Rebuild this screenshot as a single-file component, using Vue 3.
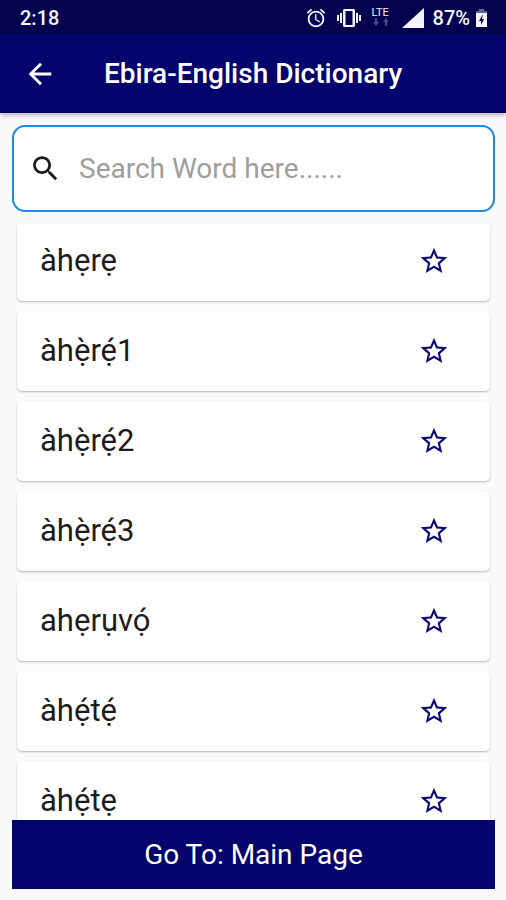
<script setup>
import { ref, computed } from 'vue'

const query = ref('')
const words = ref([
  { text: 'àhẹrẹ', starred: false },
  { text: 'àhẹ̀rẹ́1', starred: false },
  { text: 'àhẹ̀rẹ́2', starred: false },
  { text: 'àhẹ̀rẹ́3', starred: false },
  { text: 'ahẹrụvọ́', starred: false },
  { text: 'àhẹ́tẹ́', starred: false },
  { text: 'àhẹ́tẹ', starred: false }
])
const visible = computed(() =>
  words.value.filter((w) => w.text.normalize('NFC').includes(query.value.trim().normalize('NFC')))
)
</script>

<template>
  <div class="screen">
    <div class="status">
      <span class="clock">2:18</span>
      <div class="indicators">
        <svg class="alarm" viewBox="0 0 24 24" aria-hidden="true">
          <path d="M22 5.72l-4.6-3.86-1.29 1.53 4.6 3.86L22 5.72zM7.88 3.39L6.6 1.86 2 5.71l1.29 1.53 4.59-3.85zM12.5 8H11v6l4.75 2.85.75-1.23-4-2.37V8zM12 4c-4.97 0-9 4.03-9 9s4.02 9 9 9c4.97 0 9-4.03 9-9s-4.03-9-9-9zm0 16c-3.87 0-7-3.13-7-7s3.13-7 7-7 7 3.13 7 7-3.13 7-7 7z" />
        </svg>
        <svg class="vibrate" viewBox="0 0 24 24" aria-hidden="true">
          <path d="M0 15h2V9H0v6zm3 2h2V7H3v10zm19-8v6h2V9h-2zm-3 8h2V7h-2v10zM16.5 3h-9C6.67 3 6 3.67 6 4.5v15c0 .83.67 1.5 1.5 1.5h9c.83 0 1.5-.67 1.5-1.5v-15c0-.83-.67-1.5-1.5-1.5zM15.5 19h-7V5h7v14z" />
        </svg>
        <div class="network">
          <span>LTE</span>
          <svg viewBox="0 0 18 8" aria-hidden="true">
            <path d="M3 0h2v4h2L4 8 1 4h2zM13 8h2V4h2l-3-4-3 4h2z" />
          </svg>
        </div>
        <svg class="signal" viewBox="0 0 22 20" aria-hidden="true"><path d="M22 0v20H0z" /></svg>
        <span class="percent">87%</span>
        <svg class="battery" viewBox="0 0 11 18" aria-hidden="true">
          <path class="cap" d="M3 0h5v2h3v2H0V2h3z" />
          <path fill-rule="evenodd" d="M0 4h11v14H0zM7 5l-4 7h2v4l3-6H6z" />
        </svg>
      </div>
    </div>

    <header class="appbar">
      <button class="back" type="button" aria-label="Back">
        <svg viewBox="0 0 24 24" aria-hidden="true">
          <path d="M20 11H7.83l5.59-5.59L12 4l-8 8 8 8 1.41-1.41L7.83 13H20v-2z" />
        </svg>
      </button>
      <h1>Ebira-English Dictionary</h1>
    </header>

    <main class="content">
      <label class="search">
        <svg viewBox="0 0 24 24" aria-hidden="true">
          <path d="M15.5 14h-.79l-.28-.27C15.41 12.59 16 11.11 16 9.5 16 5.91 13.09 3 9.5 3S3 5.91 3 9.5 5.91 16 9.5 16c1.61 0 3.09-.59 4.23-1.57l.27.28v.79l5 4.99L20.49 19l-4.99-5zm-6 0C7.01 14 5 11.99 5 9.5S7.01 5 9.5 5 14 7.01 14 9.5 11.99 14 9.5 14z" />
        </svg>
        <input v-model="query" type="text" placeholder="Search Word here......" aria-label="Search word" />
      </label>

      <ul class="words">
        <li v-for="word in visible" :key="word.text" class="card">
          <span class="word">{{ word.text }}</span>
          <button
            class="star"
            type="button"
            :aria-label="'Favourite ' + word.text"
            :aria-pressed="word.starred"
            @click="word.starred = !word.starred"
          >
            <svg viewBox="0 0 24 24" aria-hidden="true">
              <path v-if="word.starred" d="M12 17.27L18.18 21l-1.64-7.03L22 9.24l-7.19-.61L12 2 9.19 8.63 2 9.24l5.46 4.73L5.82 21z" />
              <path v-else d="M22 9.24l-7.19-.62L12 2 9.19 8.63 2 9.24l5.46 4.73L5.82 21 12 17.27 18.18 21l-1.63-7.03L22 9.24zM12 15.4l-3.76 2.27 1-4.28-3.32-2.88 4.38-.38L12 6.1l1.71 4.04 4.38.38-3.32 2.88 1 4.28L12 15.4z" />
            </svg>
          </button>
        </li>
      </ul>

      <button class="main-page" type="button">Go To: Main Page</button>
    </main>
  </div>
</template>

<style>
body {
  margin: 0;
}
</style>

<style scoped>
* {
  box-sizing: border-box;
}

.screen {
  display: flex;
  flex-direction: column;
  height: 100vh;
  overflow: hidden;
  background: #fafafa;
  color: #1c1c1c;
  font-family: Roboto, "Noto Sans", sans-serif;
}

svg {
  display: block;
  fill: currentColor;
}

button {
  border: 0;
  font-family: inherit;
  cursor: pointer;
}

.status {
  display: flex;
  flex: none;
  align-items: center;
  justify-content: space-between;
  height: 34px;
  padding: 2px 19px 0 20px;
  background: #02024f;
  color: #f4f4fa;
  font-size: 20px;
  font-weight: 500;
}

.indicators {
  display: flex;
  align-items: center;
}

.alarm {
  width: 22px;
  height: 22px;
  margin-right: 10px;
}

.vibrate {
  width: 24px;
  height: 24px;
  margin-right: 11px;
}

.network {
  width: 18px;
  margin-right: 12px;
  padding-bottom: 3px;
  font-size: 11px;
  font-weight: 400;
  line-height: 11px;
}

.network svg {
  width: 18px;
  height: 8px;
  opacity: 0.3;
}

.signal {
  width: 22px;
  height: 20px;
  margin-right: 9px;
}

.battery {
  width: 11px;
  height: 18px;
  margin-left: 6px;
}

.cap {
  opacity: 0.4;
}

.appbar {
  z-index: 1;
  display: flex;
  flex: none;
  align-items: center;
  gap: 47px;
  height: 79px;
  padding: 1px 23px 0;
  background: #04046c;
  color: #fff;
  box-shadow: 0 2px 5px rgba(0, 0, 0, 0.3);
}

.back {
  padding: 0;
  background: none;
  color: inherit;
}

.back svg {
  width: 34px;
  height: 34px;
}

h1 {
  margin: 0;
  font-size: 28px;
  font-weight: 500;
  line-height: 36px;
}

.content {
  display: flex;
  flex: 1;
  flex-direction: column;
  min-height: 0;
  padding: 12px 11px 11px 12px;
}

.search {
  display: flex;
  flex: none;
  align-items: center;
  gap: 17px;
  height: 87px;
  padding: 0 15px;
  border: 2px solid #2088e5;
  border-radius: 13px;
  background: #fff;
}

.search svg {
  flex: none;
  width: 33px;
  height: 33px;
}

.search input {
  flex: 1;
  min-width: 0;
  padding: 0;
  border: 0;
  outline: 0;
  background: none;
  color: inherit;
  font-family: inherit;
  font-size: 28px;
}

.search input::placeholder {
  color: #9e9e9e;
  opacity: 1;
}

.words {
  flex: 1;
  min-height: 0;
  margin: 13px 0 0;
  padding: 0 5px;
  overflow: hidden;
  list-style: none;
}

.card {
  display: flex;
  align-items: center;
  justify-content: space-between;
  height: 80px;
  margin-bottom: 10px;
  padding: 0 40px 0 23px;
  border-radius: 5px;
  background: #fff;
  box-shadow: 0 1px 2px rgba(0, 0, 0, 0.28);
}

.card:first-child {
  margin-top: -4px;
}

.word {
  font-size: 31px;
  line-height: 40px;
}

.star {
  padding: 0;
  background: none;
  color: #0b0b72;
}

.star svg {
  width: 32px;
  height: 32px;
}

.main-page {
  flex: none;
  height: 69px;
  background: #04046c;
  color: #fff;
  font-size: 28px;
}
</style>
